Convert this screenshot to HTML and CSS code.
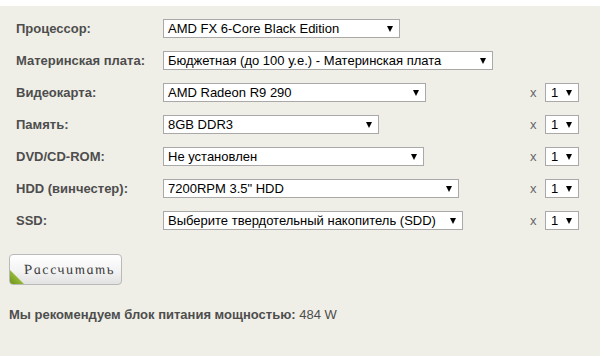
FILE: index.html
```html
<!DOCTYPE html>
<html lang="ru">
<head>
<meta charset="utf-8">
<title>Калькулятор блока питания</title>
<link rel="stylesheet" href="styles.css">
</head>
<body>
<div class="topbar"></div>
<main class="calc">
  <div class="rows">
    <div class="row">
      <label class="lbl">Процессор:</label>
      <div class="sel w-cpu"><span class="val">AMD FX 6-Core Black Edition</span><span class="arr"></span></div>
    </div>
    <div class="row">
      <label class="lbl">Материнская плата:</label>
      <div class="sel w-mb"><span class="val">Бюджетная (до 100 у.е.) - Материнская плата</span><span class="arr"></span></div>
    </div>
    <div class="row">
      <label class="lbl">Видеокарта:</label>
      <div class="sel w-gpu"><span class="val">AMD Radeon R9 290</span><span class="arr"></span></div>
      <span class="times">x</span>
      <div class="sel qty"><span class="val">1</span><span class="arr"></span></div>
    </div>
    <div class="row">
      <label class="lbl">Память:</label>
      <div class="sel w-ram"><span class="val">8GB DDR3</span><span class="arr"></span></div>
      <span class="times">x</span>
      <div class="sel qty"><span class="val">1</span><span class="arr"></span></div>
    </div>
    <div class="row">
      <label class="lbl">DVD/CD-ROM:</label>
      <div class="sel w-dvd"><span class="val">Не установлен</span><span class="arr"></span></div>
      <span class="times">x</span>
      <div class="sel qty"><span class="val">1</span><span class="arr"></span></div>
    </div>
    <div class="row">
      <label class="lbl">HDD (винчестер):</label>
      <div class="sel w-hdd"><span class="val">7200RPM 3.5" HDD</span><span class="arr"></span></div>
      <span class="times">x</span>
      <div class="sel qty"><span class="val">1</span><span class="arr"></span></div>
    </div>
    <div class="row">
      <label class="lbl">SSD:</label>
      <div class="sel w-ssd"><span class="val">Выберите твердотельный накопитель (SDD)</span><span class="arr"></span></div>
      <span class="times">x</span>
      <div class="sel qty"><span class="val">1</span><span class="arr"></span></div>
    </div>
  </div>
  <button class="calc-btn" type="button"><span class="btn-text">Рассчитать</span></button>
  <p class="result"><b>Мы рекомендуем блок питания мощностью:</b> <span class="watts">484 W</span></p>
</main>
</body>
</html>
```
FILE: styles.css
```css
html, body {
  margin: 0;
  padding: 0;
  background: #f0efe7;
  font-family: "Liberation Sans", Arial, sans-serif;
  font-size: 13px;
}
.topbar {
  height: 6px;
  background: #ffffff;
}
.calc {
  height: 350px;
  padding: 13px 21px 0 9px;
  box-sizing: border-box;
}
.rows {
  display: flex;
  flex-direction: column;
  gap: 13px;
  padding-left: 7px;
}
.row {
  display: grid;
  grid-template-columns: 147px 1fr 15px 34px;
  align-items: center;
  height: 19px;
}
.lbl {
  font-weight: bold;
  color: #4d4d4d;
  white-space: nowrap;
}
.sel {
  box-sizing: border-box;
  height: 19px;
  border: 1px solid #a9a9a9;
  background: #ffffff;
  display: flex;
  align-items: center;
  justify-content: space-between;
  padding: 0 6px 0 4px;
  color: #000;
  white-space: nowrap;
}
.val {
  line-height: 17px;
}
.arr {
  width: 0;
  height: 0;
  border-left: 3px solid transparent;
  border-right: 3px solid transparent;
  border-top: 6px solid #000;
  margin-left: 8px;
}
.w-cpu { width: 237px; }
.w-mb { width: 330px; }
.w-gpu { width: 263px; }
.w-ram { width: 216px; }
.w-dvd { width: 261px; }
.w-hdd { width: 296px; }
.w-ssd { width: 300px; }
.times {
  color: #666;
  font-size: 13px;
  line-height: 19px;
}
.qty {
  width: 34px;
  padding-left: 5px;
}
.calc-btn {
  position: relative;
  overflow: hidden;
  display: block;
  margin-top: 24px;
  width: 113px;
  height: 31px;
  border: 1px solid #b9b9b9;
  border-radius: 4px;
  background: linear-gradient(#ffffff, #f3f3f3 55%, #e2e2e2);
  font-family: "Liberation Serif", "Times New Roman", serif;
  font-style: italic;
  font-size: 14px;
  letter-spacing: 1.6px;
  color: #3a3a3a;
  padding: 0 0 0 8px;
  cursor: pointer;
}
.btn-text {
  display: inline-block;
  transform: skewX(12deg);
}
.calc-btn::before {
  content: "";
  position: absolute;
  left: 0;
  bottom: 0;
  width: 14px;
  height: 14px;
  background: linear-gradient(to top right, #6a9418, #9fbf3e 60%, #c9dc8a);
  clip-path: polygon(0 0, 0 100%, 100% 100%);
}
.result {
  margin: 22px 0 0 0;
  color: #4d4d4d;
}
.result b {
  font-weight: bold;
}
.watts {
  color: #4d4d4d;
}
```
